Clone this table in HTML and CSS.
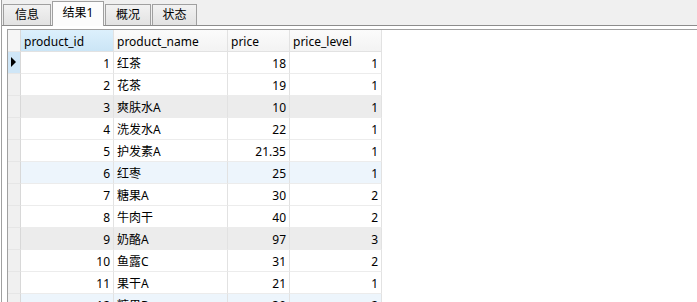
FILE: index.html
```html
<!DOCTYPE html>
<html lang="zh-CN">
<head>
<meta charset="utf-8">
<title>结果1</title>
<link rel="stylesheet" href="styles.css">
</head>
<body>
<div class="frame">
  <div class="tabbar">
    <div class="tab">信息</div>
    <div class="tab active">结果1</div>
    <div class="tab">概况</div>
    <div class="tab">状态</div>
  </div>
  <div class="content">
    <div class="grid">
      <div class="ind head"></div>
      <div class="hc sorted">product_id</div>
      <div class="hc">product_name</div>
      <div class="hc">price</div>
      <div class="hc">price_level</div>

      <div class="ind current"><span class="arrow"></span></div>
      <div class="c num">1</div><div class="c">红茶</div><div class="c num">18</div><div class="c num">1</div>

      <div class="ind"></div>
      <div class="c num">2</div><div class="c">花茶</div><div class="c num">19</div><div class="c num">1</div>

      <div class="ind"></div>
      <div class="c num gray">3</div><div class="c gray">爽肤水A</div><div class="c num gray">10</div><div class="c num gray">1</div>

      <div class="ind"></div>
      <div class="c num">4</div><div class="c">洗发水A</div><div class="c num">22</div><div class="c num">1</div>

      <div class="ind"></div>
      <div class="c num">5</div><div class="c">护发素A</div><div class="c num">21.35</div><div class="c num">1</div>

      <div class="ind"></div>
      <div class="c num blue">6</div><div class="c blue">红枣</div><div class="c num blue">25</div><div class="c num blue">1</div>

      <div class="ind"></div>
      <div class="c num">7</div><div class="c">糖果A</div><div class="c num">30</div><div class="c num">2</div>

      <div class="ind"></div>
      <div class="c num">8</div><div class="c">牛肉干</div><div class="c num">40</div><div class="c num">2</div>

      <div class="ind"></div>
      <div class="c num gray">9</div><div class="c gray">奶酪A</div><div class="c num gray">97</div><div class="c num gray">3</div>

      <div class="ind"></div>
      <div class="c num">10</div><div class="c">鱼露C</div><div class="c num">31</div><div class="c num">2</div>

      <div class="ind"></div>
      <div class="c num">11</div><div class="c">果干A</div><div class="c num">21</div><div class="c num">1</div>

      <div class="ind"></div>
      <div class="c num blue">12</div><div class="c blue">糖果B</div><div class="c num blue">30</div><div class="c num blue">2</div>
    </div>
  </div>
</div>
</body>
</html>
```

FILE: styles.css
```css
html, body {
  margin: 0;
  padding: 0;
  background: #ffffff;
  overflow: hidden;
}
body {
  width: 697px;
  height: 302px;
  font-family: "Noto Sans", "Noto Sans CJK SC", sans-serif;
  font-size: 12px;
  color: #000;
}
.frame {
  margin-left: 1px;
  border-left: 1px solid #a0a0a0;
  height: 302px;
}
.tabbar {
  height: 25px;
  background: #f0f0f0;
  border-bottom: 1px solid #8c8c8c;
  display: flex;
  align-items: flex-end;
  padding-left: 1px;
  gap: 1px;
}
.tab {
  box-sizing: border-box;
  height: 21px;
  padding: 0;
  border: 1px solid #a0a0a0;
  border-bottom: none;
  background: linear-gradient(#f2f2f2, #e2e2e2);
  font-family: "Noto Sans", "Noto Sans CJK SC", sans-serif;
  font-size: 12px;
  line-height: 19px;
  text-align: center;
  white-space: nowrap;
  flex: none;
}
.tab:nth-child(1) { width: 48px; }
.tab:nth-child(3) { width: 46px; }
.tab:nth-child(4) { width: 45px; }
.tab.active {
  width: 52px;
  height: 25px;
  margin-bottom: -1px;
  background: #fcfcfc;
  line-height: 22px;
  position: relative;
}
.content {
  padding: 3px 0 0 5px;
}
.grid {
  border-top: 1px solid #a0a0a0;
  border-left: 1px solid #a0a0a0;
  display: grid;
  grid-template-columns: 13px 93px 114px 62px 92px;
  grid-auto-rows: 22px;
}
.grid > div {
  box-sizing: border-box;
  border-right: 1px solid #e2e2e2;
  border-bottom: 1px solid #ececec;
  white-space: nowrap;
  overflow: hidden;
  line-height: 23px;
  padding: 0 3px;
}
.hc {
  background: linear-gradient(#fbfbfb, #f3f3f3);
  border-bottom-color: #e2e2e2 !important;
}
.hc.sorted {
  background: linear-gradient(#dcf0fc, #cbe5f6);
}
.ind {
  background: #f0f0f0;
  border-bottom-color: #e6e6e6 !important;
  border-right-color: #d8d8d8 !important;
  position: relative;
}
.ind.head {
  background: #f6f6f6;
}
.ind.current {
  background: #cfe6f7;
}
.arrow {
  position: absolute;
  left: 3px;
  top: 5px;
  width: 0;
  height: 0;
  border-left: 5px solid #000;
  border-top: 5px solid transparent;
  border-bottom: 5px solid transparent;
}
.num {
  text-align: right;
}
.gray {
  background: #ececec;
}
.blue {
  background: #edf5fc;
}
```
